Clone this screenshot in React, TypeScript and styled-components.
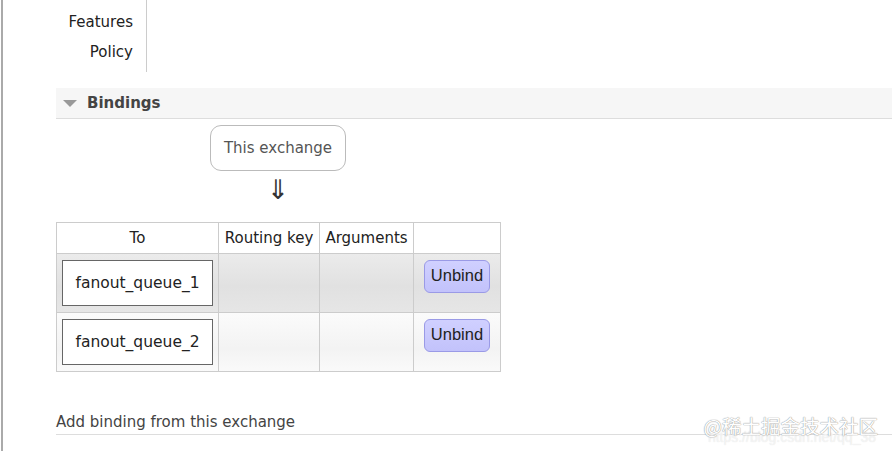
import styled, { createGlobalStyle } from "styled-components"

const GlobalStyle = createGlobalStyle`
  html, body {
    margin: 0;
    padding: 0;
    background: #fff;
  }
  body {
    font-family: "DejaVu Sans", Verdana, sans-serif;
    color: #444;
  }
`

const Page = styled.div`
  position: relative;
  height: 451px;
  margin-left: 1px;
  border-left: 2px solid #aaa;
  padding-left: 53px;
  overflow: hidden;
`

const Props = styled.div`
  width: 77px;
  padding: 7px 13px 5px 0;
  border-right: 1px solid #ccc;
  text-align: right;
  font-size: 15px;
  color: #222;
`

const PropRow = styled.div`
  height: 30px;
  line-height: 30px;
`

const SectionHeader = styled.div`
  margin-top: 16px;
  height: 30px;
  background: #f6f6f6;
  border-bottom: 1px solid #ddd;
  display: flex;
  align-items: center;
  padding-left: 7px;
  font-size: 15px;
  font-weight: bold;
  color: #444;
`

const Triangle = styled.span`
  width: 0;
  height: 0;
  border-left: 7px solid transparent;
  border-right: 7px solid transparent;
  border-top: 7px solid #999;
  margin-right: 10px;
`

const Flow = styled.div`
  display: flex;
  flex-direction: column;
  align-items: center;
  width: 136px;
  margin: 6px 0 0 154px;
`

const ExchangeBox = styled.div`
  box-sizing: border-box;
  width: 136px;
  height: 46px;
  border: 1px solid #bbb;
  border-radius: 11px;
  display: flex;
  align-items: center;
  justify-content: center;
  font-size: 15px;
  color: #555;
`

const Arrow = styled.div`
  font-size: 27px;
  line-height: 30px;
  margin-top: 4px;
  color: #333;
`

const Table = styled.table`
  margin-top: 17px;
  border-collapse: collapse;
  font-size: 15px;
  color: #222;
`

const Th = styled.th<{ $w: number }>`
  width: ${p => p.$w}px;
  height: 30px;
  border: 1px solid #ccc;
  font-weight: normal;
  padding: 0;
  background: #fff;
  white-space: nowrap;
`

const Row = styled.tr<{ $alt?: boolean }>`
  height: 59px;
  background: ${p =>
    p.$alt
      ? "linear-gradient(#fbfbfb, #f3f3f3 60%, #fafafa)"
      : "linear-gradient(#ebebeb, #e1e1e1 55%, #e6e6e6)"};
`

const Td = styled.td`
  border: 1px solid #ccc;
  padding: 0;
  vertical-align: top;
`

const QueueBox = styled.div`
  box-sizing: border-box;
  margin: 6px 5px 0 5px;
  height: 46px;
  border: 1px solid #666;
  background: #fff;
  display: flex;
  align-items: center;
  justify-content: center;
  font-size: 15.5px;
  color: #222;
`

const UnbindButton = styled.button`
  display: block;
  box-sizing: border-box;
  margin: 6px 0 0 10px;
  width: 66px;
  height: 33px;
  padding: 0 0 3px 0;
  border: 1px solid #9a9ae6;
  border-radius: 6px;
  background: linear-gradient(#d0d0ff, #c2c2fb);
  font-family: "Liberation Sans", Arial, sans-serif;
  font-size: 16.5px;
  color: #222;
`

const AddBinding = styled.div`
  margin-top: 41px;
  padding-bottom: 3px;
  border-bottom: 1px solid #ddd;
  font-size: 15px;
  color: #444;
`

const Watermark = styled.div`
  position: absolute;
  right: 14px;
  top: 411px;
  font-family: "Noto Sans CJK SC", sans-serif;
  font-size: 19.5px;
  color: #fff;
  text-shadow: 0 0 1px #888, 0 0 1px #888;
  opacity: 0.85;
`

const WatermarkUrl = styled.div`
  position: absolute;
  right: 16px;
  top: 429px;
  font-family: "Liberation Sans", Arial, sans-serif;
  font-size: 14px;
  color: rgba(255, 255, 255, 0.6);
  text-shadow: 0 0 1px #ddd;
`

const queues = ["fanout_queue_1", "fanout_queue_2"]

export default function App() {
  return (
    <>
      <GlobalStyle />
      <Page>
        <Props>
          <PropRow>Features</PropRow>
          <PropRow>Policy</PropRow>
        </Props>
        <SectionHeader>
          <Triangle />
          Bindings
        </SectionHeader>
        <Flow>
          <ExchangeBox>This exchange</ExchangeBox>
          <Arrow>⇓</Arrow>
        </Flow>
        <Table>
          <thead>
            <tr>
              <Th $w={161}>To</Th>
              <Th $w={100}>Routing key</Th>
              <Th $w={93}>Arguments</Th>
              <Th $w={86}></Th>
            </tr>
          </thead>
          <tbody>
            {queues.map((q, i) => (
              <Row key={q} $alt={i % 2 === 1}>
                <Td><QueueBox>{q}</QueueBox></Td>
                <Td></Td>
                <Td></Td>
                <Td><UnbindButton>Unbind</UnbindButton></Td>
              </Row>
            ))}
          </tbody>
        </Table>
        <AddBinding>Add binding from this exchange</AddBinding>
        <WatermarkUrl>https://blog.csdn.net/qq_38</WatermarkUrl>
        <Watermark>@稀土掘金技术社区</Watermark>
      </Page>
    </>
  )
}
